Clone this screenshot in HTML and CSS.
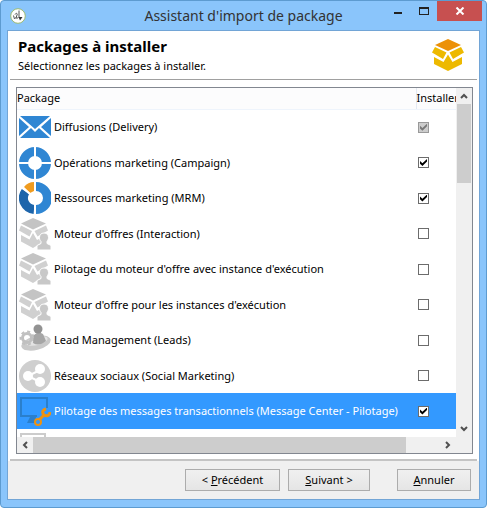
FILE: index.html
```html
<!DOCTYPE html>
<html lang="fr">
<head>
<meta charset="utf-8">
<title>Assistant d'import de package</title>
<link rel="stylesheet" href="styles.css">
</head>
<body>
<svg width="0" height="0" class="defs" aria-hidden="true">
  <symbol id="offer" viewBox="0 0 32 32">
    <path fill="#c4c4c4" d="M14 0 27 5.500 14 11.500 2 5.500z"/>
    <path fill="#d0d0d0" d="M2 7.500 13 13 10.500 18.500 0 12.500zM27 7.500 15.500 13 18.500 18.500 29 12.500zM2 17 10.500 21.500 14 15 18 22 22 20V25L14 30 2 23.500z"/>
    <path fill="#c8c8c8" stroke="#fff" stroke-width="1" d="M25 15c3 0 4.500 2 4.500 4.500 0 2-1 3-1.500 4v2l4 2V32H18v-4.500l4-2v-2c-1-1-1.500-2-1.500-4C20.500 17 22 15 25 15z"/>
  </symbol>
  <symbol id="up" viewBox="0 0 8 8"><path fill="none" stroke="#505050" stroke-width="2" d="M1 6 4 3 7 6"/></symbol>
</svg>
<main class="window">
  <header class="titlebar">
    <svg class="app-icon" viewBox="0 0 16 16"><circle cx="8" cy="8" r="7.300" fill="#fff" stroke="#9dbb72" stroke-width="1"/><path fill="none" stroke="#555" stroke-width="1" d="M9 2.500V10M5 6.500C6 4.500 8 5.500 7 7L6 10M3.500 7.500 4.500 11M5 10h3"/><path fill="#333" d="M8.500 9h4L10 12.500z"/></svg>
    <span class="caption">Assistant d'import de package</span>
    <div class="controls">
      <button class="control" aria-label="Réduire"><svg viewBox="0 0 10 8"><path fill="#222" d="M1 5h8v2H1z"/></svg></button>
      <button class="control" aria-label="Agrandir"><svg viewBox="0 0 10 8"><path fill="#222" fill-rule="evenodd" d="M0 0h10v8H0zM1 2v5h8V2z"/></svg></button>
      <button class="control close" aria-label="Fermer"><svg viewBox="0 0 10 8"><path fill="none" stroke="#fff" stroke-width="2" d="M1.500 .5 8.500 7.500M8.500 .5 1.500 7.500"/></svg></button>
    </div>
  </header>
  <section class="client">
    <div class="intro">
      <div>
        <h1>Packages à installer</h1>
        <p>Sélectionnez les packages à installer.</p>
      </div>
      <svg class="package-icon" viewBox="0 0 32 32"><path fill="#ec9108" d="M16 0 29 6 16 12 3 6z"/><path fill="#edb900" d="M3 8 14.500 13.500 11 20 0 13.500zM29 8 17.500 13.500 21 20 32 13.500zM2 18 11.500 23 16 15.500 20.500 23 30 18V25L16 32 2 25z"/></svg>
    </div>
    <div class="content">
      <div class="list">
        <div class="viewport">
          <table>
            <thead><tr><th>Package</th><th class="pick">Installer</th></tr></thead>
            <tbody>
              <tr><td><label for="p1"><svg class="icon" viewBox="0 0 32 32"><g fill="#2f86d3"><path d="M1 5H31L16 18zM1 27 12 17 16 21 20 17 31 27z"/><path d="M0 7 10 16 0 25zM32 7 22 16 32 25z"/></g></svg>Diffusions (Delivery)</label></td><td class="pick"><input type="checkbox" id="p1" checked disabled></td></tr>
              <tr><td><label for="p2"><svg class="icon" viewBox="0 0 32 32"><circle cx="16" cy="16" r="11.500" fill="none" stroke="#2f86d3" stroke-width="9"/><path stroke="#fff" stroke-width="2" d="M16 0V32M0 16H32"/></svg>Opérations marketing (Campaign)</label></td><td class="pick"><input type="checkbox" id="p2" checked></td></tr>
              <tr><td><label for="p3"><svg class="icon" viewBox="0 0 32 32"><g fill="none" stroke-width="9"><path stroke="#2f86d3" d="M17 4.500A11.500 11.500 0 0 1 17 27.500"/><path stroke="#1d65ab" d="M15 27.500A11.500 11.500 0 0 1 6.500 9.500"/></g><path fill="#f09c20" d="M5 5Q9 0 15 0V9L11 11z"/><path stroke="#fff" stroke-width="2" d="M16 0V32M3 5 11 12"/></svg>Ressources marketing (MRM)</label></td><td class="pick"><input type="checkbox" id="p3" checked></td></tr>
              <tr><td><label for="p4"><svg class="icon"><use href="#offer"/></svg>Moteur d'offres (Interaction)</label></td><td class="pick"><input type="checkbox" id="p4"></td></tr>
              <tr><td><label for="p5"><svg class="icon"><use href="#offer"/></svg>Pilotage du moteur d'offre avec instance d'exécution</label></td><td class="pick"><input type="checkbox" id="p5"></td></tr>
              <tr><td><label for="p6"><svg class="icon"><use href="#offer"/></svg>Moteur d'offre pour les instances d'exécution</label></td><td class="pick"><input type="checkbox" id="p6"></td></tr>
              <tr><td><label for="p7"><svg class="icon" viewBox="0 0 32 32"><ellipse cx="17" cy="19" rx="15" ry="7" fill="#c9c9c9" transform="rotate(-14 17 19)"/><ellipse cx="18" cy="17" rx="11" ry="4" fill="#e4e4e4" transform="rotate(-14 18 17)"/><circle cx="8" cy="14" r="4.500" fill="none" stroke="#c0c0c0" stroke-width="3"/><circle cx="8" cy="14" r="6.500" fill="none" stroke="#c0c0c0" stroke-width="2" stroke-dasharray="3 3"/><path fill="#a6a6a6" d="M14 19 15 11Q19 7 24 10L27 17Q20 23 14 19z"/><circle cx="19" cy="5" r="4.500" fill="#929292"/></svg>Lead Management (Leads)</label></td><td class="pick"><input type="checkbox" id="p7"></td></tr>
              <tr><td><label for="p8"><svg class="icon" viewBox="0 0 32 32"><circle cx="16" cy="16" r="16" fill="#cfcfcf"/><path fill="none" stroke="#fff" stroke-width="2" d="M21 10 9 16 21 22"/><g fill="#fff"><circle cx="9" cy="16" r="5"/><circle cx="21" cy="9" r="5"/><circle cx="21" cy="22" r="5"/></g></svg>Réseaux sociaux (Social Marketing)</label></td><td class="pick"><input type="checkbox" id="p8"></td></tr>
              <tr class="selected"><td><label for="p9"><svg class="icon" viewBox="0 0 32 32"><path fill="none" stroke="#2a7fcc" stroke-width="2" d="M18 21H2V3H28V13"/><path fill="#2a7fcc" d="M11 22h6l-1 6H8z"/><path fill="none" stroke="#ee9210" stroke-width="3" d="M27 14C23 15 23 18 25 20L20 25M25 20C28 22 31 20 31 17"/><circle cx="19" cy="27" r="3" fill="#3399ff" stroke="#ee9210" stroke-width="2"/></svg>Pilotage des messages transactionnels (Message Center - Pilotage)</label></td><td class="pick"><input type="checkbox" id="p9" checked></td></tr>
              <tr><td><svg class="icon" viewBox="0 0 32 32"><path fill="#fff" stroke="#ccc" stroke-width="2" d="M2 22V3H26V22z"/></svg></td><td class="pick"></td></tr>
            </tbody>
          </table>
        </div>
        <div class="scroll vertical">
          <button aria-label="Haut"><svg><use href="#up"/></svg></button>
          <div class="thumb"></div>
          <button class="end down" aria-label="Bas"><svg><use href="#up"/></svg></button>
        </div>
        <div class="scroll horizontal">
          <button class="left" aria-label="Gauche"><svg><use href="#up"/></svg></button>
          <div class="thumb"></div>
          <button class="end right" aria-label="Droite"><svg><use href="#up"/></svg></button>
        </div>
        <div class="corner"></div>
      </div>
    </div>
    <footer class="actions">
      <button class="action">&lt; <u>P</u>récédent</button>
      <button class="action next"><u>S</u>uivant &gt;</button>
      <button class="action cancel"><u>A</u>nnuler</button>
    </footer>
  </section>
</main>
</body>
</html>
```
FILE: styles.css
```css
* { box-sizing: border-box; }

body {
  margin: 0;
  background: #fff;
  color: #000;
  font: 11px/16px "Noto Sans", "Open Sans", sans-serif;
}

button { padding: 0; border: 0; background: none; font: inherit; color: inherit; }
svg { display: block; flex: none; }
.defs { position: absolute; }

.window {
  display: flex;
  flex-direction: column;
  height: 100vh;
  padding: 0 6px 7px;
  border: 1px solid #5d9bd0;
  border-radius: 4px;
  background: #8ac5fb;
}

.titlebar { display: flex; align-items: center; height: 29px; flex: none; padding-left: 3px; }
.app-icon { width: 16px; height: 16px; }
.caption { flex: 1; padding-left: 76px; text-align: center; font-size: 14px; line-height: 28px; color: #333; }
.controls { display: flex; align-self: flex-start; margin-right: -2px; }
.control { display: grid; place-items: center; width: 26px; height: 20px; }
.control svg { width: 10px; height: 8px; }
.close { width: 45px; background: #c75050; }

.client {
  display: flex;
  flex-direction: column;
  flex: 1;
  min-height: 0;
  padding: 0 2px;
  border: 1px solid #72a5d6;
  background: #fff;
}

.intro {
  display: flex;
  justify-content: space-between;
  align-items: center;
  flex: none;
  height: 49px;
  padding: 0 13px 0 8px;
  border-bottom: 1px solid #a0a0a0;
}
h1 { margin: 0; font-size: 15px; line-height: 20px; }
p { margin: 2px 0 0; }
.package-icon { width: 32px; height: 32px; }

.content { display: flex; flex: 1; min-height: 0; padding: 7px 4px 5px 6px; border-bottom: 2px solid #c4c4c4; }
.list {
  display: grid;
  grid-template: 1fr 16px / 1fr 16px;
  flex: 1;
  min-width: 0;
  border: 1px solid #828790;
}
.viewport { min-width: 0; min-height: 0; overflow: hidden; }

table { width: 100%; table-layout: fixed; border-collapse: collapse; }
th { height: 21px; padding: 0; text-align: left; font-weight: normal; background: #fcfcfd; border-bottom: 1px solid #eef4fc; }
td { height: 36px; padding: 0 0 0 2px; }
tbody tr:nth-child(even) td { height: 35px; }
.pick { width: 40px; white-space: nowrap; }
th.pick { border-left: 1px solid #e3e9f3; }
label { display: flex; align-items: center; gap: 3px; white-space: nowrap; }
.icon { width: 32px; height: 32px; }
.selected { background: #3399ff; color: #fff; }

input {
  display: grid;
  place-items: center;
  appearance: none;
  width: 11px;
  height: 11px;
  margin: 0;
  border: 1px solid #6c6c6c;
  background: #fff;
}
input:checked::before {
  content: "";
  width: 7px;
  height: 7px;
  background: #000;
  clip-path: polygon(0 30%, 35% 60%, 100% 0, 100% 35%, 35% 100%, 0 68%);
}
input:disabled { background: #ccc; border-color: #999; }
input:disabled::before { background: #777; }

.scroll { display: flex; background: #f0f0f0; }
.scroll button { display: grid; place-items: center; width: 16px; height: 16px; }
.scroll svg { width: 8px; height: 8px; }
.vertical { flex-direction: column; }
.thumb { background: #cdcdcd; }
.vertical .thumb { height: 79px; margin: 0 1px; }
.vertical .end { margin-top: auto; }
.horizontal .thumb { width: 85%; }
.horizontal .end { margin-left: auto; }
.down svg { transform: rotate(180deg); }
.left svg { transform: rotate(-90deg); }
.right svg { transform: rotate(90deg); }
.corner { background: #f0f0f0; }

.actions {
  display: flex;
  justify-content: flex-end;
  flex: none;
  height: 38px;
  margin: 0 -2px;
  padding: 8px;
  background: #f0f0f0;
}
.action { width: 95px; height: 22px; border: 1px solid #acacac; background: linear-gradient(#f0f0f0, #e5e5e5); }
.next { width: 82px; margin: 0 27px 0 8px; }
.cancel { width: 74px; }
```
